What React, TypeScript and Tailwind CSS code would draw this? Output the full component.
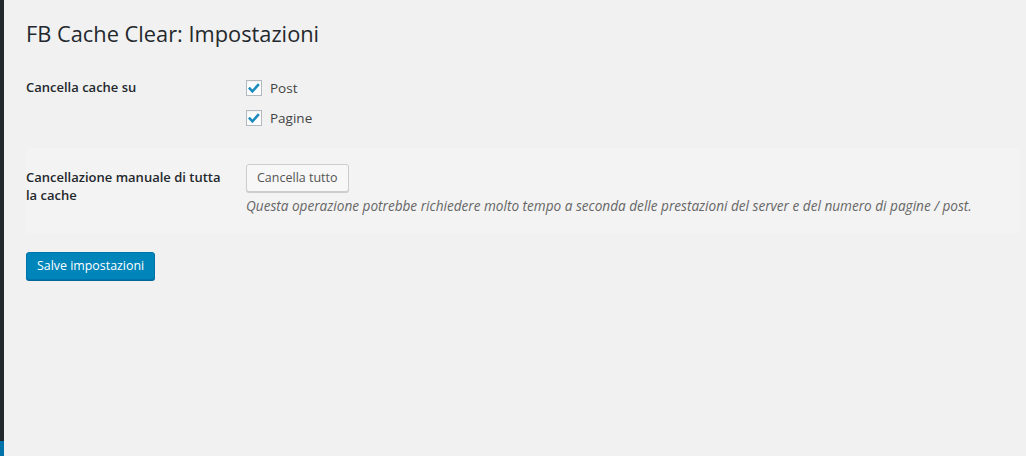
import React from "react";

const font = { fontFamily: '"Open Sans", "Noto Sans", sans-serif' };

function Check({ label }: { label: string }) {
  return (
    <label className="flex h-[30px] items-center gap-[8px] text-[13.5px] text-[#444]">
      <span className="flex size-[16px] items-center justify-center border border-[#b4b9be] bg-white shadow-[inset_0_1px_2px_rgba(0,0,0,0.07)]">
        <svg viewBox="0 0 16 16" className="size-[14px]">
          <path d="M2.2 7.6 L6.2 11.8 L13.6 3.6" fill="none" stroke="#1e8cbe" strokeWidth="3" />
        </svg>
      </span>
      {label}
    </label>
  );
}

export default function App() {
  return (
    <div className="flex h-[456px] w-[1026px] overflow-hidden bg-[#f1f1f1]" style={font}>
      {/* collapsed admin menu edge */}
      <div className="flex w-[4px] flex-col justify-end bg-[#23282d]">
        <div className="h-[15px] bg-[#0073aa]" />
      </div>

      <div className="ml-[22px] mr-[6px] flex-1">
        <h1 className="pt-[19px] pb-[10px] text-[21.8px] leading-[29px] font-normal text-[#23282d]">
          FB Cache Clear: Impostazioni
        </h1>

        {/* row 1 */}
        <div className="flex">
          <div className="w-[220px] pt-[20px] text-[13px] leading-[18px] font-semibold text-[#23282d]">
            Cancella cache su
          </div>
          <div className="py-[15px]">
            <Check label="Post" />
            <Check label="Pagine" />
          </div>
        </div>

        {/* row 2 */}
        <div className="flex bg-[#f3f3f3]">
          <div className="w-[220px] pt-[20px] pr-[20px] text-[13px] leading-[18px] font-semibold text-[#23282d]">
            Cancellazione manuale di tutta la cache
          </div>
          <div className="pt-[16px] pb-[18px]">
            <button className="flex h-[28px] items-center rounded-[3px] border border-[#ccc] bg-[#f7f7f7] px-[10px] text-[12.5px] text-[#555] shadow-[0_1px_0_#ccc]">
              Cancella tutto
            </button>
            <p className="mt-[5px] text-[13.6px] leading-[18px] text-[#666] italic">
              Questa operazione potrebbe richiedere molto tempo a seconda delle prestazioni del server e del numero di pagine / post.
            </p>
          </div>
        </div>

        <div className="flex pt-[19px]">
          <button className="flex h-[28px] items-center rounded-[3px] border border-[#0073aa] bg-[#0085ba] px-[10px] text-[12.4px] text-white shadow-[0_1px_0_#006799]">
            Salve impostazioni
          </button>
        </div>
      </div>
    </div>
  );
}
